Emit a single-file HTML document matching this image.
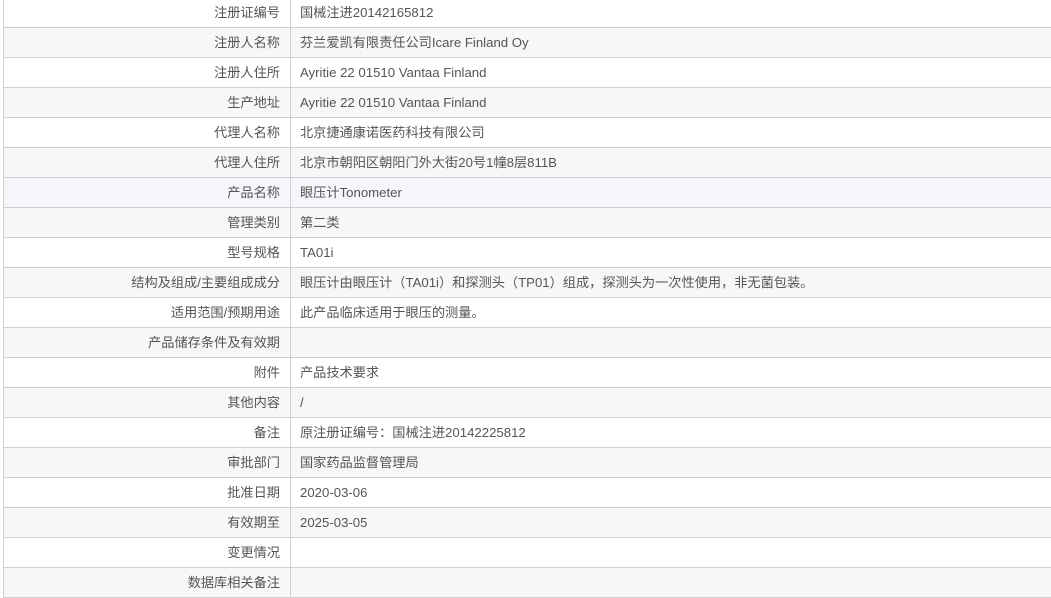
<!DOCTYPE html>
<html><head><meta charset="utf-8"><style>
body{margin:0;background:#fff;width:1051px;height:596px;overflow:hidden;position:relative;font-family:"Liberation Sans","Noto Sans CJK SC",sans-serif;font-size:13.2px;color:#555;}
table{position:absolute;left:3px;top:-2px;width:1048px;border-collapse:collapse;border-left:1px solid #d0d0d0;}
td{height:29px;border-bottom:1px solid #d0d0d0;padding:0;line-height:29px;white-space:nowrap;}
td.l{width:276px;text-align:right;padding-right:10px;border-right:1px solid #d0d0d0;}
td.v{padding-left:9px;}
tr:nth-child(even) td{background:#f7f7f7;}
tr.h td{background:#f5f6fa;}
</style></head><body>
<table>
<tr><td class="l">注册证编号</td><td class="v">国械注进20142165812</td></tr>
<tr><td class="l">注册人名称</td><td class="v">芬兰爱凯有限责任公司Icare Finland Oy</td></tr>
<tr><td class="l">注册人住所</td><td class="v">Ayritie 22 01510 Vantaa Finland</td></tr>
<tr><td class="l">生产地址</td><td class="v">Ayritie 22 01510 Vantaa Finland</td></tr>
<tr><td class="l">代理人名称</td><td class="v">北京捷通康诺医药科技有限公司</td></tr>
<tr><td class="l">代理人住所</td><td class="v">北京市朝阳区朝阳门外大街20号1幢8层811B</td></tr>
<tr class="h"><td class="l">产品名称</td><td class="v">眼压计Tonometer</td></tr>
<tr><td class="l">管理类别</td><td class="v">第二类</td></tr>
<tr><td class="l">型号规格</td><td class="v">TA01i</td></tr>
<tr><td class="l">结构及组成/主要组成成分</td><td class="v">眼压计由眼压计（TA01i）和探测头（TP01）组成，探测头为一次性使用，非无菌包装。</td></tr>
<tr><td class="l">适用范围/预期用途</td><td class="v">此产品临床适用于眼压的测量。</td></tr>
<tr><td class="l">产品储存条件及有效期</td><td class="v"></td></tr>
<tr><td class="l">附件</td><td class="v">产品技术要求</td></tr>
<tr><td class="l">其他内容</td><td class="v">/</td></tr>
<tr><td class="l">备注</td><td class="v">原注册证编号：国械注进20142225812</td></tr>
<tr><td class="l">审批部门</td><td class="v">国家药品监督管理局</td></tr>
<tr><td class="l">批准日期</td><td class="v">2020-03-06</td></tr>
<tr><td class="l">有效期至</td><td class="v">2025-03-05</td></tr>
<tr><td class="l">变更情况</td><td class="v"></td></tr>
<tr><td class="l">数据库相关备注</td><td class="v"></td></tr>
</table>
</body></html>
